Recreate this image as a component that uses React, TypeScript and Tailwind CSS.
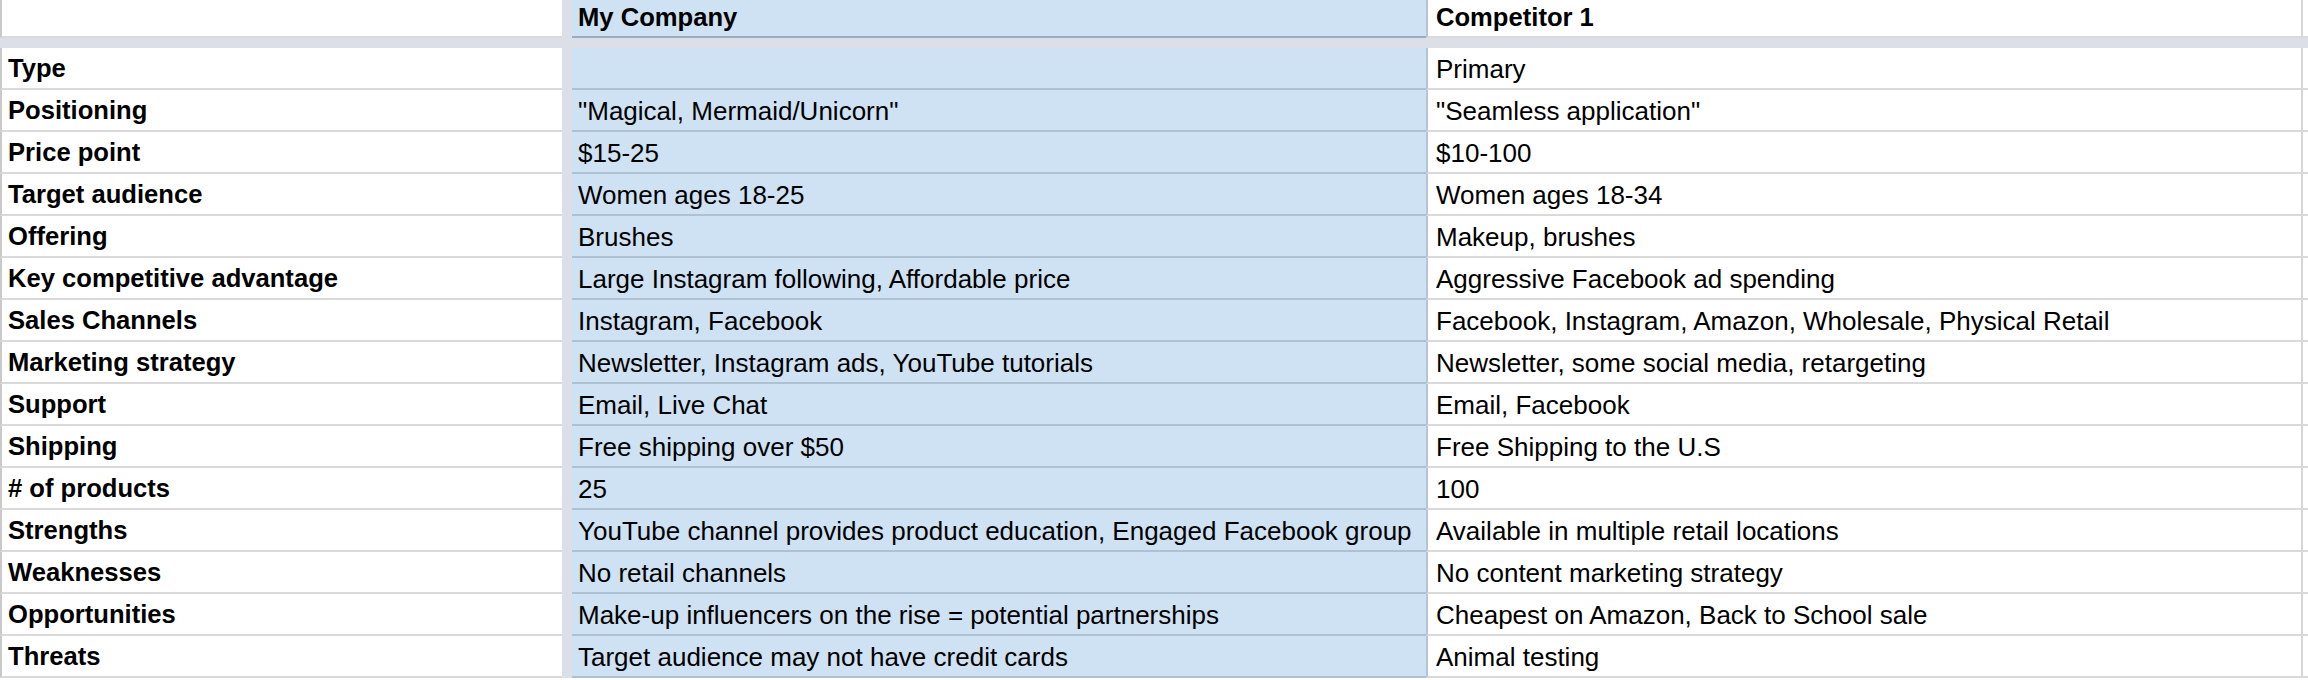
import React from 'react';

const rows: [string, string, string][] = [
  ['Type', '', 'Primary'],
  ['Positioning', '"Magical, Mermaid/Unicorn"', '"Seamless application"'],
  ['Price point', '$15-25', '$10-100'],
  ['Target audience', 'Women ages 18-25', 'Women ages 18-34'],
  ['Offering', 'Brushes', 'Makeup, brushes'],
  ['Key competitive advantage', 'Large Instagram following, Affordable price', 'Aggressive Facebook ad spending'],
  ['Sales Channels', 'Instagram, Facebook', 'Facebook, Instagram, Amazon, Wholesale, Physical Retail'],
  ['Marketing strategy', 'Newsletter, Instagram ads, YouTube tutorials', 'Newsletter, some social media, retargeting'],
  ['Support', 'Email, Live Chat', 'Email, Facebook'],
  ['Shipping', 'Free shipping over $50', 'Free Shipping to the U.S'],
  ['# of products', '25', '100'],
  ['Strengths', 'YouTube channel provides product education, Engaged Facebook group', 'Available in multiple retail locations'],
  ['Weaknesses', 'No retail channels', 'No content marketing strategy'],
  ['Opportunities', 'Make-up influencers on the rise = potential partnerships', 'Cheapest on Amazon, Back to School sale'],
  ['Threats', 'Target audience may not have credit cards', 'Animal testing'],
];

const Row: React.FC<{ cells: [string, string, string]; header?: boolean }> = ({ cells, header }) => {
  const h = header ? 'h-[38px]' : 'h-[42px] pt-px';
  const weight = header ? 'font-bold text-[25.6px]' : 'text-[26px]';
  return (
    <div className={`flex ${header ? 'h-[38px]' : 'h-[42px]'}`}>
      <div className={`w-[562px] shrink-0 border-l-2 border-b-2 border-l-[#c9c9c9] border-b-[#dadada] pl-[6px] flex items-center font-bold text-[25.6px] whitespace-nowrap overflow-hidden ${h}`}>
        {cells[0]}
      </div>
      <div className="w-[10px] shrink-0 bg-[#dadfe8]" />
      <div className={`w-[854px] shrink-0 bg-[#cfe2f3] border-b-2 ${header ? 'border-b-[#98adc2]' : 'border-b-[#aec1d3]'} ${weight} pl-[6px] flex items-center whitespace-nowrap overflow-hidden ${h}`}>
        {cells[1]}
      </div>
      <div className={`w-[875px] shrink-0 border-l-2 border-l-[#b3c4d5] border-b-2 border-b-[#dadada] pl-[8px] flex items-center whitespace-nowrap overflow-hidden ${weight} ${h}`}>
        {cells[2]}
      </div>
      <div className="flex-1 border-l-2 border-l-[#d6d6d6] border-b-2 border-b-[#dadada]" />
    </div>
  );
};

const App: React.FC = () => {
  return (
    <div className="w-[2308px] h-[680px] bg-white overflow-hidden text-black leading-none font-['Liberation_Sans',Arial,sans-serif]">
      <Row cells={['', 'My Company', 'Competitor 1']} header />
      <div className="h-[10px] bg-[#dcdfe8]" />
      {rows.map((r) => (
        <Row key={r[0]} cells={r} />
      ))}
    </div>
  );
};

export default App;
